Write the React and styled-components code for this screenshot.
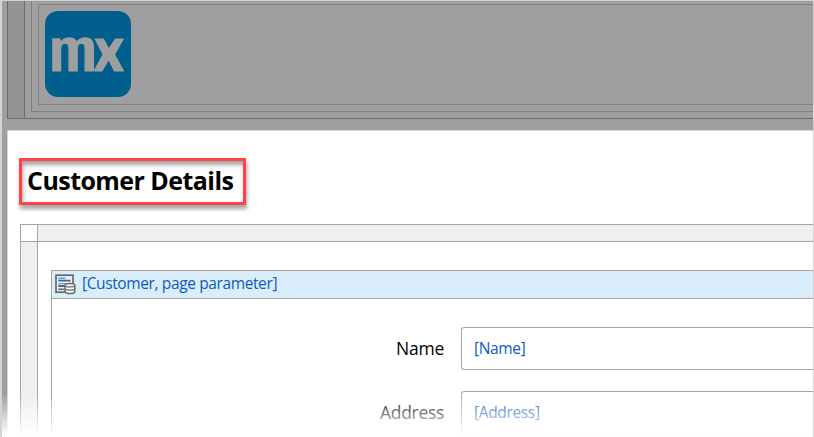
import React from "react";
import styled, { createGlobalStyle } from "styled-components";

const GlobalStyle = createGlobalStyle`
  *, *::before, *::after { box-sizing: border-box; }
  body { margin: 0; background: #fff; overflow: hidden; }
`;

const Page = styled.div`
  position: relative;
  display: flex;
  flex-direction: column;
  width: 814px;
  height: 437px;
  overflow: hidden;
  border: 1px solid #d4d4d4;
  border-left-width: 2px;
  border-bottom: 0;
  background: #9f9f9f;
  font-family: "Open Sans", "Noto Sans", sans-serif;
`;

const HeaderRegion = styled.header`
  display: flex;
  flex: none;
  height: 118px;
  margin-left: 5px;
  border-left: 1px solid #6b6b6b;
  border-bottom: 1px solid #6b6b6b;
`;

const HeaderRail = styled.div`
  flex: none;
  width: 17px;
  background: #949494;
  border-right: 1px solid #6b6b6b;
`;

const HeaderContainer = styled.div`
  flex: 1;
  height: 111px;
  margin-left: 6px;
  padding: 3px 0 6px 6px;
  border-left: 1px solid #828282;
  border-bottom: 1px solid #828282;
`;

const LogoSlot = styled.div`
  height: 101px;
  padding: 6px;
  border: 1px solid #828282;
  border-right: 0;
`;

const LogoTile = styled.div`
  display: flex;
  align-items: center;
  justify-content: center;
  width: 86px;
  height: 86px;
  border-radius: 13px;
  background: #005f8d;
`;

const Content = styled.main`
  flex: 1;
  margin: 11px 0 0 5px;
  padding: 27px 0 0 11px;
  border-top: 1px solid #d4d4d4;
  border-left: 1px solid #d4d4d4;
  background: #fff;
`;

const TitleFrame = styled.div`
  display: flex;
  align-items: center;
  width: 227px;
  height: 47px;
  padding: 0 0 3px 5px;
  border: 3px solid #fe4345;
  box-shadow:
    1px 4px 4px rgba(0, 0, 0, 0.36),
    inset 1px 4px 4px rgba(0, 0, 0, 0.36);
`;

const Title = styled.h1`
  margin: 0;
  color: #000;
  font-size: 25px;
  font-weight: 700;
  line-height: 34px;
  letter-spacing: -0.55px;
  white-space: nowrap;
`;

const LayoutGrid = styled.section`
  display: grid;
  grid-template-columns: 17px 1fr;
  grid-template-rows: 17px 1fr;
  height: 260px;
  margin: 19px 0 0 1px;
  border-top: 1px solid #a6a6a6;
  border-left: 1px solid #a6a6a6;
`;

const GridCell = styled.div`
  border-right: ${(p) => (p.$rail ? "1px solid #a6a6a6" : "0")};
  border-bottom: ${(p) => (p.$top ? "1px solid #a6a6a6" : "0")};
  background: ${(p) => (p.$shaded ? "#efefef" : "#fff")};
`;

const GridBody = styled.div`
  padding: 28px 0 0 13px;
`;

const DataView = styled.div`
  height: 220px;
  border-top: 1px solid #a6a6a6;
  border-left: 1px solid #a6a6a6;
`;

const DataSource = styled.div`
  display: flex;
  align-items: center;
  height: 28px;
  padding-left: 3px;
  border-bottom: 1px solid #a6a6a6;
  background: #daedfb;
`;

const Binding = styled.span`
  padding-bottom: 2px;
  color: #0b5bc4;
  font-size: 15.5px;
  line-height: 22px;
  letter-spacing: ${(p) => p.$tracking};
  white-space: nowrap;
`;

const SourceBinding = styled(Binding)`
  margin-left: 6px;
  padding-bottom: 3px;
`;

const Form = styled.div`
  display: flex;
  flex-direction: column;
  gap: 21px;
  padding-top: 28px;
`;

const FormRow = styled.div`
  display: grid;
  grid-template-columns: 392px 1fr;
  column-gap: 17px;
  height: 43px;
`;

const Label = styled.label`
  align-self: center;
  padding-bottom: 1px;
  color: #000;
  font-size: 17.5px;
  line-height: 24px;
  letter-spacing: ${(p) => p.$tracking};
  text-align: right;
`;

const Field = styled.div`
  display: flex;
  align-items: center;
  padding-left: 12px;
  border: 1px solid #a6a6a6;
  border-right: 0;
  border-radius: 3px 0 0 3px;
`;

const BottomFade = styled.div`
  position: absolute;
  left: -2px;
  right: -1px;
  bottom: 0;
  height: 43px;
  background: linear-gradient(rgba(255, 255, 255, 0), #fff 96%);
`;

function MxLogo() {
  return (
    <svg width="86" height="86" viewBox="0 0 86 86" aria-label="mx">
      <path
        fill="#9f9f9f"
        d="M7.2 27.3H15.2L15.8 30.2C18.2 27.4 21 26.3 24.2 26.3C27.8 26.3 30.4 27.5 31.7 30.2C34 27.5 37 26.3 40.2 26.3C46.2 26.3 49 29.8 49 36V60.4H39.5V37.5C39.5 34.2 38.6 32.8 36.5 32.8C34 32.8 32.8 34.5 32.8 37.5V60.4H23.4V37.5C23.4 34.2 22.4 32.8 20.3 32.8C17.8 32.8 16.2 34.5 16.2 38V60.4H7.2Z"
      />
      <path
        fill="#9f9f9f"
        d="M49.4 27.4H58.8L63.8 37L70 27.4H79.1L70.1 43.4L79.4 60.4H69L63.6 49.5L57.3 60.4H49.3V58.6L57.5 43.4Z"
      />
    </svg>
  );
}

function DataViewIcon() {
  return (
    <svg width="21" height="21" viewBox="0 0 21 21" aria-hidden="true">
      <rect x="1" y="1.2" width="17" height="17" fill="#e2f1fb" stroke="#68696b" strokeWidth="1.7" />
      <path d="M3.3 4.2h7M3.3 9.6h7" stroke="#43aaf5" strokeWidth="1.4" />
      <path d="M3.3 6.6h12.2M3.3 12h6.5" stroke="#606366" strokeWidth="1.9" />
      <path d="M3.3 15.3h5.5" stroke="#606366" strokeWidth="1.6" />
      <path
        d="M10 11.2c0-2.3 9.8-2.3 9.8 0v6.5c0 2.5-9.8 2.5-9.8 0Z"
        fill="#f7f7f7"
        stroke="#686868"
        strokeWidth="1.5"
      />
      <path
        d="M10 11.4c0 2 9.8 2 9.8 0M10 14.6c0 2.1 9.8 2.1 9.8 0"
        fill="none"
        stroke="#686868"
        strokeWidth="1.3"
      />
    </svg>
  );
}

const fields = [
  { label: "Name", tracking: "-0.25px", valueTracking: "-0.35px" },
  { label: "Address", tracking: "-0.3px", valueTracking: "-0.35px" },
];

export default function App() {
  return (
    <>
      <GlobalStyle />
      <Page>
        <HeaderRegion>
          <HeaderRail />
          <HeaderContainer>
            <LogoSlot>
              <LogoTile>
                <MxLogo />
              </LogoTile>
            </LogoSlot>
          </HeaderContainer>
        </HeaderRegion>
        <Content>
          <TitleFrame>
            <Title>Customer Details</Title>
          </TitleFrame>
          <LayoutGrid>
            <GridCell $rail $top />
            <GridCell $top $shaded />
            <GridCell $rail $shaded />
            <GridBody>
              <DataView>
                <DataSource>
                  <DataViewIcon />
                  <SourceBinding $tracking="-0.38px">[Customer, page parameter]</SourceBinding>
                </DataSource>
                <Form>
                  {fields.map((f) => (
                    <FormRow key={f.label}>
                      <Label $tracking={f.tracking}>{f.label}</Label>
                      <Field>
                        <Binding $tracking={f.valueTracking}>[{f.label}]</Binding>
                      </Field>
                    </FormRow>
                  ))}
                </Form>
              </DataView>
            </GridBody>
          </LayoutGrid>
        </Content>
        <BottomFade />
      </Page>
    </>
  );
}
